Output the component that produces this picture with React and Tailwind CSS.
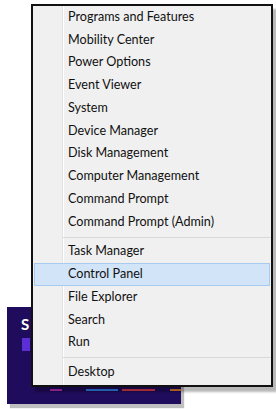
import React from "react";

const groups = [
  ["Programs and Features", "Mobility Center", "Power Options", "Event Viewer", "System", "Device Manager", "Disk Management", "Computer Management", "Command Prompt", "Command Prompt (Admin)"],
  ["Task Manager", "Control Panel", "File Explorer", "Search", "Run"],
  ["Desktop"],
];

function Row({ label }) {
  const active = label === "Control Panel";
  return (
    <div
      className={
        "flex h-[22.75px] items-center " +
        (active ? "mx-[1px] border border-[#a6cbee] bg-[#d2e5f8]" : "")
      }
    >
      <div className={active ? "w-[27px] shrink-0" : "w-[29px] shrink-0"} />
      <span className="pl-[6px] text-[12.6px] text-[#111]">{label}</span>
    </div>
  );
}

function Sep() {
  return (
    <div className="flex h-[7px] items-center">
      <div className="w-[30px] shrink-0" />
      <div className="h-[1px] flex-1 bg-[#d9d9d9]" />
    </div>
  );
}

export default function App() {
  return (
    <div
      className="relative h-[409px] w-[276px] overflow-hidden bg-white"
      style={{ fontFamily: 'Lato, "Open Sans", sans-serif' }}
    >
      {/* start screen tile behind the menu */}
      <div className="absolute left-[7px] top-[307px] flex h-[97px] w-[174px] flex-col bg-[#1f0c5c] pl-[14px] pt-[8px] shadow-[3px_4px_1px_rgba(0,0,0,0.25)]">
        <span className="text-[15px] font-bold leading-[18px] text-white">S</span>
        <div className="ml-[1px] mt-[5px] h-[13px] w-[8px] bg-[#5b2ed6]" />
        <div className="mt-[38px] flex h-[2px] items-stretch">
          <div className="ml-[29px] w-[12px] bg-[#b52db8]" />
          <div className="ml-[24px] w-[32px] bg-[#2f82ea]" />
          <div className="ml-[4px] w-[33px] bg-[#d8394a]" />
          <div className="ml-[15px] w-[11px] bg-[#e07a30]" />
        </div>
      </div>

      {/* context menu */}
      <div className="relative ml-[31px] mt-[4px] w-[242px] border-2 border-[#111] bg-[#f0f0f0] shadow-[4px_5px_2px_rgba(0,0,0,0.28)]">
        <div className="pointer-events-none absolute bottom-0 left-[29px] top-0 w-[1px] bg-[#e2e2e2]" />
        <div className="pointer-events-none absolute bottom-0 left-[30px] top-0 w-[1px] bg-white" />
        <div className="relative flex flex-col pb-[1px]">
          {groups.map((g, gi) => (
            <React.Fragment key={gi}>
              {gi > 0 && <Sep />}
              {g.map((l) => (
                <Row key={l} label={l} />
              ))}
            </React.Fragment>
          ))}
        </div>
      </div>
    </div>
  );
}
